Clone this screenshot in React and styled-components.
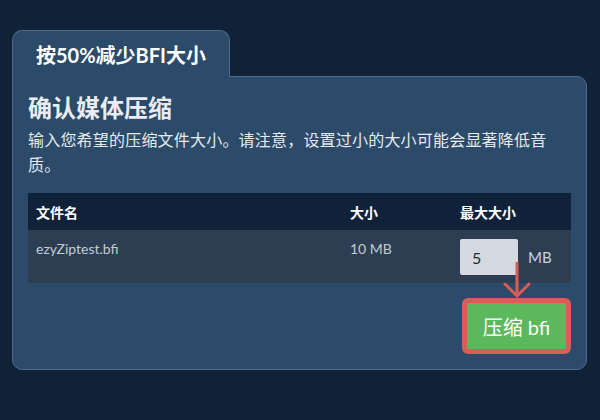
import React from 'react'
import styled, { createGlobalStyle } from 'styled-components'

const GlobalStyle = createGlobalStyle`
  body {
    margin: 0;
    background: #0f2238;
    font-family: Lato, "Noto Sans CJK SC", sans-serif;
    color: #e9edf2;
  }
`

const rows = [{ name: 'ezyZiptest.bfi', size: '10 MB', max: '5' }]

export default function App() {
  return (
    <Page>
      <GlobalStyle />
      <Tab>按50%减少BFI大小</Tab>
      <Panel>
        <Title>确认媒体压缩</Title>
        <Description>
          输入您希望的压缩文件大小。请注意，设置过小的大小可能会显著降低音质。
        </Description>
        <Table>
          <thead>
            <tr>
              <Th width="298px">文件名</Th>
              <Th width="94px">大小</Th>
              <Th>最大大小</Th>
            </tr>
          </thead>
          <tbody>
            {rows.map((row) => (
              <tr key={row.name}>
                <Td>{row.name}</Td>
                <Td>{row.size}</Td>
                <Td>
                  <SizeField>
                    <SizeInput defaultValue={row.max} />
                    <Unit>MB</Unit>
                  </SizeField>
                </Td>
              </tr>
            ))}
          </tbody>
        </Table>
        <Actions>
          <Arrow width="30" height="36" viewBox="0 0 30 36">
            <path
              d="M15 0 V34 M3 22 L15 34 L27 22"
              fill="none"
              stroke="#db5b56"
              strokeWidth="3"
              strokeLinecap="round"
              strokeLinejoin="round"
            />
          </Arrow>
          <CompressButton>压缩 bfi</CompressButton>
        </Actions>
      </Panel>
    </Page>
  )
}

const Page = styled.div`
  padding: 30px 13px 0 12px;
`

const Tab = styled.div`
  position: relative;
  z-index: 1;
  display: inline-block;
  height: 46px;
  line-height: 48px;
  margin-bottom: -1px;
  padding: 0 23px;
  background: #2c4a69;
  border: 1px solid #4d6b8c;
  border-bottom: none;
  border-radius: 10px 10px 0 0;
  font-size: 20px;
  font-weight: 700;
  color: #ffffff;
`

const Panel = styled.section`
  background: #2c4a69;
  border: 1px solid #4d6b8c;
  border-radius: 0 10px 10px 10px;
  padding: 16px 15px 15px;
`

const Title = styled.h2`
  margin: 0;
  font-size: 24px;
  line-height: 29px;
  font-weight: 700;
  color: #e9edf2;
`

const Description = styled.p`
  margin: 5px 0 16px;
  font-size: 16px;
  letter-spacing: 0.2px;
  line-height: 25px;
  color: #e6eaef;
`

const Table = styled.table`
  width: 100%;
  border-collapse: collapse;
  font-size: 14px;
`

const Th = styled.th`
  width: ${({ width }) => width || 'auto'};
  height: 37px;
  padding: 0 8px;
  text-align: left;
  font-weight: 700;
  color: #ffffff;
  background: #10223a;
`

const Td = styled.td`
  padding: 9px 8px 8px;
  vertical-align: top;
  line-height: 20px;
  color: #c3cbd5;
  background: #2d3e53;
`

const SizeField = styled.div`
  display: flex;
  align-items: center;
  gap: 10px;
`

const SizeInput = styled.input`
  width: 58px;
  height: 36px;
  box-sizing: border-box;
  padding: 0 12px;
  border: none;
  border-radius: 2px;
  background: #d5dae2;
  font-family: Lato, sans-serif;
  font-size: 16px;
  color: #1f2a36;
`

const Unit = styled.span`
  font-size: 15px;
  color: #c9d1da;
`

const Actions = styled.div`
  position: relative;
  display: flex;
  justify-content: flex-end;
  margin-top: 15px;
`

const Arrow = styled.svg`
  position: absolute;
  top: -36px;
  right: 39px;
`

const CompressButton = styled.button`
  width: 109px;
  height: 56px;
  border: 5px solid #d95d58;
  border-radius: 6px;
  background: #5cb85c;
  color: #ffffff;
  font-family: Lato, "Noto Sans CJK SC", sans-serif;
  font-size: 20px;
  cursor: pointer;
`
